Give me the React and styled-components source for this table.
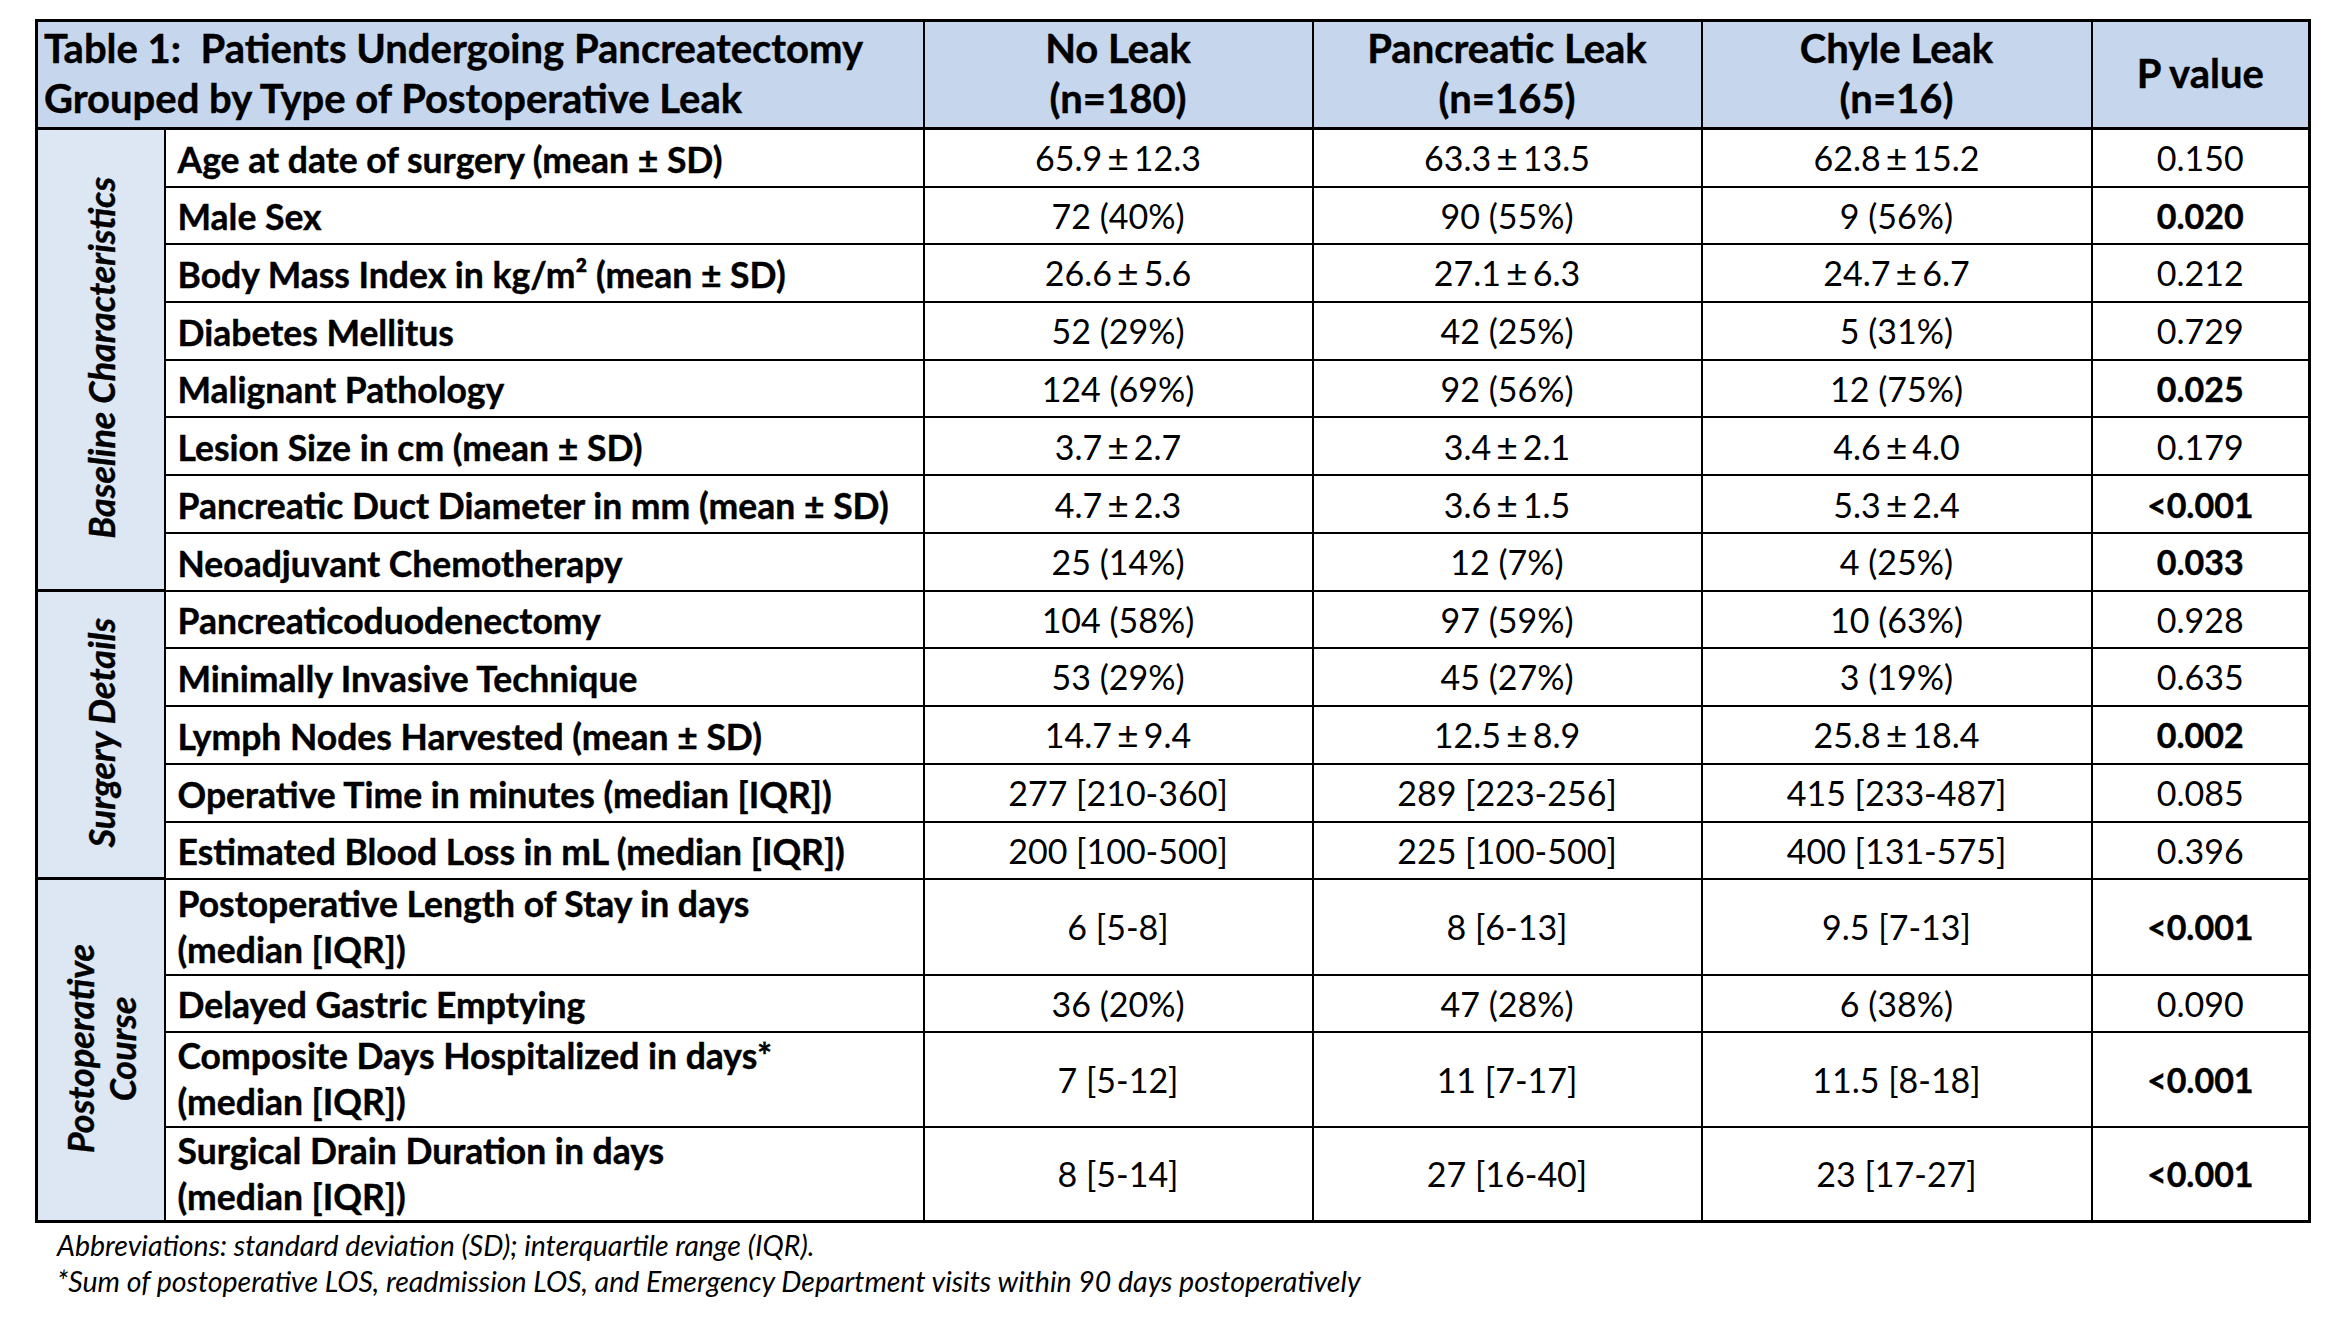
import React from "react";
import styled, { createGlobalStyle } from "styled-components";

const GlobalStyle = createGlobalStyle`
  html, body {
    margin: 0;
    padding: 0;
    background: #ffffff;
  }
  body {
    font-family: Lato, "Open Sans", "Liberation Sans", sans-serif;
    color: #000;
  }
`

const Page = styled.div`
  padding: 19px 0 0 35px;
`

const Table = styled.table`
  border-collapse: collapse;
  table-layout: fixed;
  width: 2273px;
  border: 3px solid #000;
`

const HeadCell = styled.th`
  background: #c6d7ed;
  border: 2px solid #000;
  border-bottom-width: 3px;
  font-weight: 700;
  font-size: 40px;
  line-height: 50px;
  -webkit-text-stroke: 0.4px #000;
  text-align: ${({$left}) => $left ? 'left' : 'center'};
  vertical-align: middle;
  padding: 0 ${({$left}) => $left ? '6px' : '0'} 4px;
  white-space: pre-wrap;
`

const Row = styled.tr`
  height: ${({$h}) => $h}px;
`

const GroupCell = styled.td`
  background: #dde7f3;
  border: 2px solid #000;
  border-top-width: 3px;
  border-bottom-width: 3px;
  text-align: center;
  vertical-align: middle;
  padding: 0;
`

const GroupText = styled.div`
  writing-mode: vertical-rl;
  transform: rotate(180deg);
  display: inline-block;
  font-weight: 700;
  font-style: italic;
  font-size: 36px;
  line-height: 42px;
  -webkit-text-stroke: 0.4px #000;
  text-align: center;
`

const Label = styled.td`
  border: 2px solid #000;
  font-weight: 700;
  font-size: 35.5px;
  line-height: ${({$double}) => $double ? '46px' : '50px'};
  -webkit-text-stroke: 0.4px #000;
  padding: ${({$double}) => $double ? '0' : '4px'} 8px 0 12px;
  vertical-align: middle;
  white-space: nowrap;
`

const Value = styled.td`
  border: 2px solid #000;
  font-size: 34px;
  font-weight: ${({$bold}) => $bold ? 700 : 400};
  -webkit-text-stroke: ${({$bold}) => $bold ? '0.4px #000' : '0'};
  text-align: center;
  vertical-align: middle;
  padding: 0;
  white-space: nowrap;
`

const PlusMinus = styled.span`
  font-size: 1.1em;
  line-height: 1;
  margin: 0 5px;
`

const Notes = styled.div`
  padding: 4px 0 0 22px;
  font-style: italic;
  font-size: 28.5px;
  line-height: 36px;
`

const groups = [
  {
    name: ["Baseline Characteristics"],
    rows: [
      ["Age at date of surgery (mean \u00b1 SD)", "65.9 \u00b1 12.3", "63.3 \u00b1 13.5", "62.8 \u00b1 15.2", "0.150"],
      ["Male Sex", "72 (40%)", "90 (55%)", "9 (56%)", "0.020", true],
      ["Body Mass Index in kg/m\u00b2 (mean \u00b1 SD)", "26.6 \u00b1 5.6", "27.1 \u00b1 6.3", "24.7 \u00b1 6.7", "0.212"],
      ["Diabetes Mellitus", "52 (29%)", "42 (25%)", "5 (31%)", "0.729"],
      ["Malignant Pathology", "124 (69%)", "92 (56%)", "12 (75%)", "0.025", true],
      ["Lesion Size in cm (mean \u00b1 SD)", "3.7 \u00b1 2.7", "3.4 \u00b1 2.1", "4.6 \u00b1 4.0", "0.179"],
      ["Pancreatic Duct Diameter in mm (mean \u00b1 SD)", "4.7 \u00b1 2.3", "3.6 \u00b1 1.5", "5.3 \u00b1 2.4", "<0.001", true],
      ["Neoadjuvant Chemotherapy", "25 (14%)", "12 (7%)", "4 (25%)", "0.033", true],
    ],
    heights: [58, 57.5, 57.5, 58, 57.5, 58, 58, 57.5],
  },
  {
    name: ["Surgery Details"],
    rows: [
      ["Pancreaticoduodenectomy", "104 (58%)", "97 (59%)", "10 (63%)", "0.928"],
      ["Minimally Invasive Technique", "53 (29%)", "45 (27%)", "3 (19%)", "0.635"],
      ["Lymph Nodes Harvested (mean \u00b1 SD)", "14.7 \u00b1 9.4", "12.5 \u00b1 8.9", "25.8 \u00b1 18.4", "0.002", true],
      ["Operative Time in minutes (median [IQR])", "277 [210-360]", "289 [223-256]", "415 [233-487]", "0.085"],
      ["Estimated Blood Loss in mL (median [IQR])", "200 [100-500]", "225 [100-500]", "400 [131-575]", "0.396"],
    ],
    heights: [57, 58, 58, 58, 57],
  },
  {
    name: ["Postoperative", "Course"],
    rows: [
      [["Postoperative Length of Stay in days", "(median [IQR])"], "6 [5-8]", "8 [6-13]", "9.5 [7-13]", "<0.001", true],
      ["Delayed Gastric Emptying", "36 (20%)", "47 (28%)", "6 (38%)", "0.090"],
      [["Composite Days Hospitalized in days*", "(median [IQR])"], "7 [5-12]", "11 [7-17]", "11.5 [8-18]", "<0.001", true],
      [["Surgical Drain Duration in days", "(median [IQR])"], "8 [5-14]", "27 [16-40]", "23 [17-27]", "<0.001", true],
    ],
    heights: [96, 57, 95, 94],
  },
]

// split "a ± b" so the sign can get its own spacing, as in the original
function Txt({text}){
  const parts = text.split(" \u00b1 ")
  if(parts.length < 2) return text
  return <>{parts[0]}<PlusMinus>{"\u00b1"}</PlusMinus>{parts[1]}</>
}

function LabelText({text}){
  if(Array.isArray(text)) return <>{text[0]}<br/>{text[1]}</>
  return text
}

function Group({group}){
  return group.rows.map((row, i) => (
    <Row key={i} $h={group.heights[i]}>
      {i === 0 && (
        <GroupCell rowSpan={group.rows.length}>
          <GroupText>
            {group.name.map((n, k) => <div key={k}>{n}</div>)}
          </GroupText>
        </GroupCell>
      )}
      <Label $double={Array.isArray(row[0])}><LabelText text={row[0]}/></Label>
      <Value><Txt text={row[1]}/></Value>
      <Value><Txt text={row[2]}/></Value>
      <Value><Txt text={row[3]}/></Value>
      <Value $bold={row[5]}>{row[4]}</Value>
    </Row>
  ))
}

export default function App(){
  return(
    <Page>
      <GlobalStyle/>
      <Table>
        <colgroup>
          <col style={{width: "128px"}}/>
          <col style={{width: "759px"}}/>
          <col style={{width: "389px"}}/>
          <col style={{width: "389px"}}/>
          <col style={{width: "390px"}}/>
          <col style={{width: "218px"}}/>
        </colgroup>
        <thead>
          <Row $h={108}>
            <HeadCell colSpan={2} $left>{"Table 1:  Patients Undergoing Pancreatectomy\nGrouped by Type of Postoperative Leak"}</HeadCell>
            <HeadCell>No Leak<br/>(n=180)</HeadCell>
            <HeadCell>Pancreatic Leak<br/>(n=165)</HeadCell>
            <HeadCell>Chyle Leak<br/>(n=16)</HeadCell>
            <HeadCell>P value</HeadCell>
          </Row>
        </thead>
        <tbody>
          {groups.map((g, i) => <Group key={i} group={g}/>)}
        </tbody>
      </Table>
      <Notes>
        <div>Abbreviations: standard deviation (SD); interquartile range (IQR).</div>
        <div>*Sum of postoperative LOS, readmission LOS, and Emergency Department visits within 90 days postoperatively</div>
      </Notes>
    </Page>
  )
}
